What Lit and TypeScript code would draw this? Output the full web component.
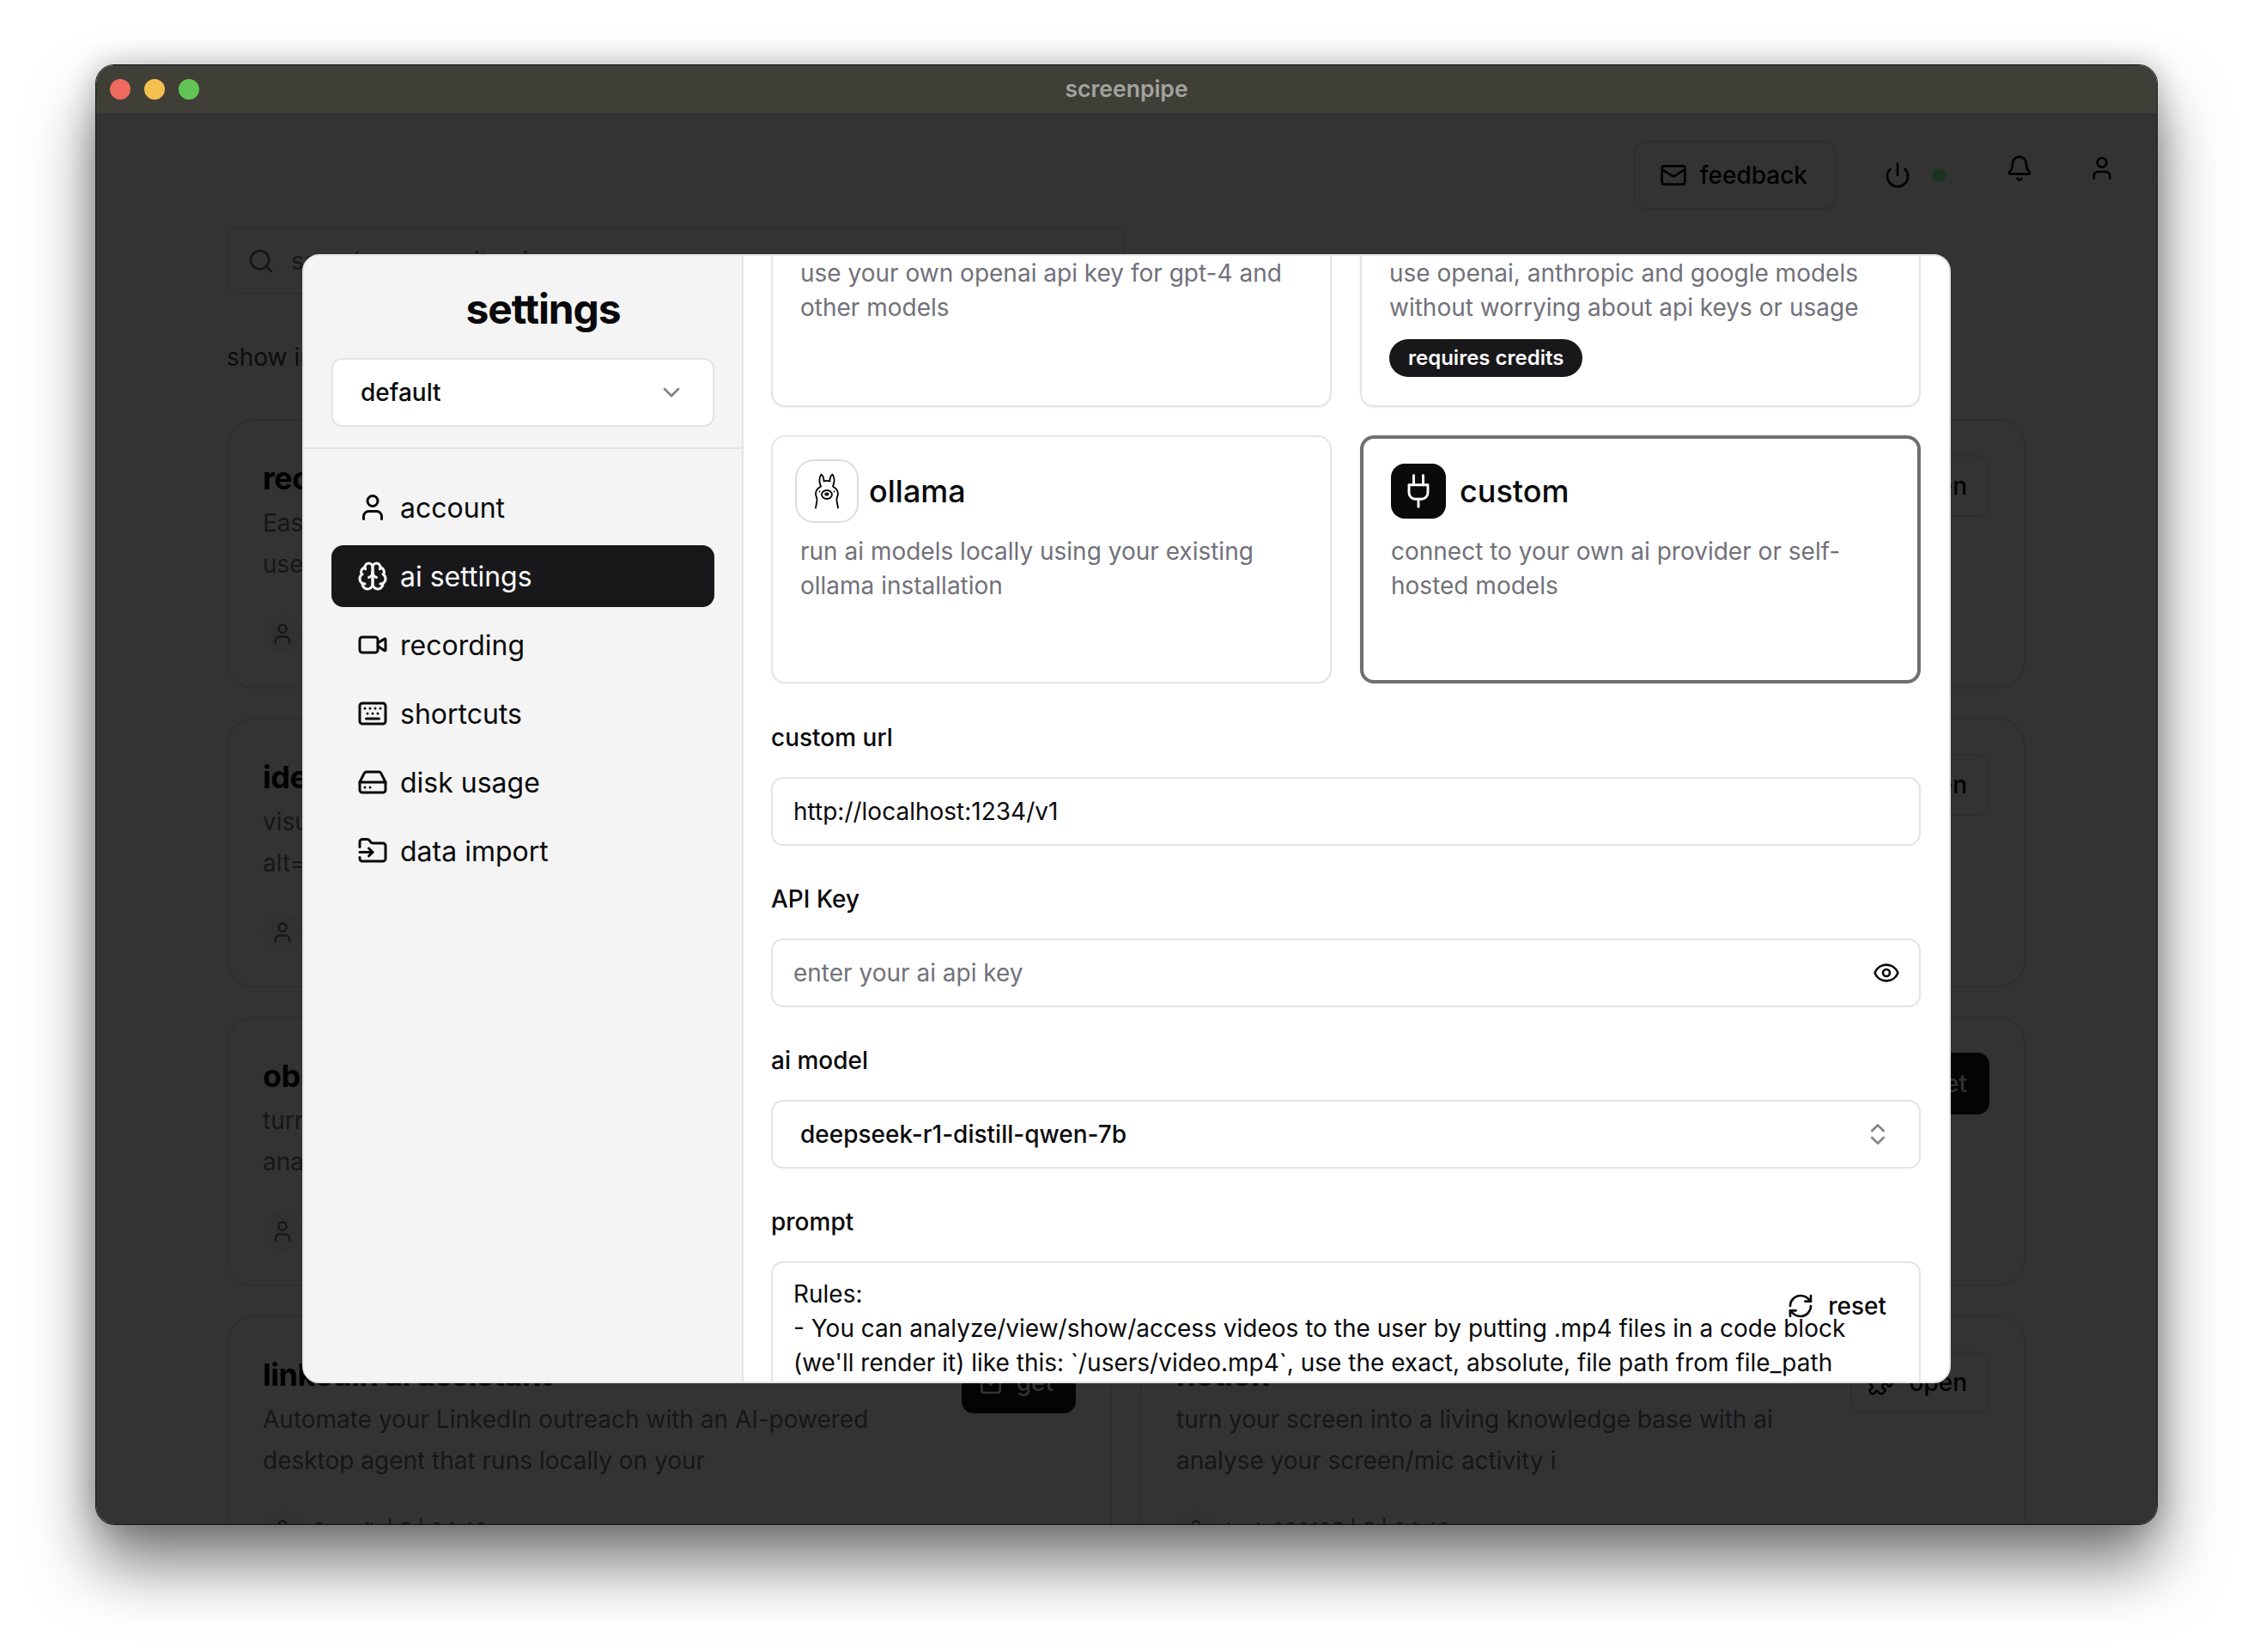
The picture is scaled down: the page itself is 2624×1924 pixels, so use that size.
import { LitElement, html, css, svg } from 'lit';
import { customElement } from 'lit/decorators.js';

const ICONS: Record<string, unknown> = {
  user: svg`<path d="M19 21v-2a4 4 0 0 0-4-4H9a4 4 0 0 0-4 4v2"/><circle cx="12" cy="7" r="4"/>`,
  brain: svg`<path d="M12 5a3 3 0 1 0-5.997.125 4 4 0 0 0-2.526 5.77 4 4 0 0 0 .556 6.588A4 4 0 1 0 12 18Z"/><path d="M12 5a3 3 0 1 1 5.997.125 4 4 0 0 1 2.526 5.77 4 4 0 0 1-.556 6.588A4 4 0 1 1 12 18Z"/><path d="M15 13a4.5 4.5 0 0 1-3-4 4.5 4.5 0 0 1-3 4"/><path d="M17.599 6.5a3 3 0 0 0 .399-1.375"/><path d="M6.003 5.125A3 3 0 0 0 6.401 6.5"/><path d="M3.477 10.896a4 4 0 0 1 .585-.396"/><path d="M19.938 10.5a4 4 0 0 1 .585.396"/><path d="M6 18a4 4 0 0 1-1.967-.516"/><path d="M19.967 17.484A4 4 0 0 1 18 18"/>`,
  video: svg`<path d="m16 13 5.223 3.482a.5.5 0 0 0 .777-.416V7.87a.5.5 0 0 0-.752-.432L16 10.5"/><rect x="2" y="6" width="14" height="12" rx="2"/>`,
  keyboard: svg`<path d="M10 8h.01"/><path d="M12 12h.01"/><path d="M14 8h.01"/><path d="M16 12h.01"/><path d="M18 8h.01"/><path d="M6 8h.01"/><path d="M7 16h10"/><path d="M8 12h.01"/><rect width="20" height="16" x="2" y="4" rx="2"/>`,
  drive: svg`<line x1="22" x2="2" y1="12" y2="12"/><path d="M5.45 5.11 2 12v6a2 2 0 0 0 2 2h16a2 2 0 0 0 2-2v-6l-3.45-6.89A2 2 0 0 0 16.76 4H7.24a2 2 0 0 0-1.79 1.11z"/><line x1="6" x2="6.01" y1="16" y2="16"/><line x1="10" x2="10.01" y1="16" y2="16"/>`,
  folderInput: svg`<path d="M2 9V5a2 2 0 0 1 2-2h3.9a2 2 0 0 1 1.69.9l.81 1.2a2 2 0 0 0 1.67.9H20a2 2 0 0 1 2 2v10a2 2 0 0 1-2 2H4a2 2 0 0 1-2-2v-1"/><path d="M2 13h10"/><path d="m9 16 3-3-3-3"/>`,
  mail: svg`<rect width="20" height="16" x="2" y="4" rx="2"/><path d="m22 7-8.97 5.7a1.94 1.94 0 0 1-2.06 0L2 7"/>`,
  power: svg`<path d="M12 2v10"/><path d="M18.4 6.6a9 9 0 1 1-12.77.04"/>`,
  bell: svg`<path d="M10.268 21a2 2 0 0 0 3.464 0"/><path d="M3.262 15.326A1 1 0 0 0 4 17h16a1 1 0 0 0 .74-1.673C19.41 13.956 18 12.499 18 8A6 6 0 0 0 6 8c0 4.499-1.411 5.956-2.738 7.326"/>`,
  eye: svg`<path d="M2.062 12.348a1 1 0 0 1 0-.696 10.75 10.75 0 0 1 19.876 0 1 1 0 0 1 0 .696 10.75 10.75 0 0 1-19.876 0"/><circle cx="12" cy="12" r="3"/>`,
  updown: svg`<path d="m7 15 5 5 5-5"/><path d="m7 9 5-5 5 5"/>`,
  down: svg`<path d="m6 9 6 6 6-6"/>`,
  search: svg`<circle cx="11" cy="11" r="8"/><path d="m21 21-4.3-4.3"/>`,
  refresh: svg`<path d="M3 12a9 9 0 0 1 9-9 9.75 9.75 0 0 1 6.74 2.74L21 8"/><path d="M21 3v5h-5"/><path d="M21 12a9 9 0 0 1-9 9 9.75 9.75 0 0 1-6.74-2.74L3 16"/><path d="M8 16H3v5"/>`,
  plug: svg`<path d="M12 22v-5"/><path d="M9 8V2"/><path d="M15 8V2"/><path d="M18 8v5a4 4 0 0 1-4 4h-4a4 4 0 0 1-4-4V8Z"/>`,
  get: svg`<rect x="4" y="3" width="16" height="18" rx="2"/><path d="m9 11 3 3 3-3"/>`,
  puzzle: svg`<path d="M19.439 7.85c-.049.322.059.648.289.878l1.568 1.568c.47.47.706 1.087.706 1.704s-.235 1.233-.706 1.704l-1.611 1.611a.98.98 0 0 1-.837.276c-.47-.07-.802-.48-.968-.925a2.501 2.501 0 1 0-3.214 3.214c.446.166.855.497.925.968a.979.979 0 0 1-.276.837l-1.61 1.61a2.404 2.404 0 0 1-1.705.707 2.402 2.402 0 0 1-1.704-.706l-1.568-1.568a1.026 1.026 0 0 0-.877-.29c-.493.074-.84.504-1.02.968a2.5 2.5 0 1 1-3.237-3.237c.464-.18.894-.527.967-1.02a1.026 1.026 0 0 0-.289-.877l-1.568-1.568A2.402 2.402 0 0 1 1.998 12c0-.617.236-1.234.706-1.704L4.23 8.77c.24-.24.581-.353.917-.303.515.077.877.528 1.073 1.01a2.5 2.5 0 1 0 3.259-3.259c-.482-.196-.933-.558-1.01-1.073-.05-.336.062-.676.303-.917l1.525-1.525A2.402 2.402 0 0 1 12 1.998c.617 0 1.234.236 1.704.706l1.568 1.568c.23.23.556.338.877.29.493-.074.84-.504 1.02-.968a2.5 2.5 0 1 1 3.237 3.237c-.464.18-.894.527-.967 1.02Z"/>`,
};

const icon = (name: string, size = 32, stroke = 2) => html`<svg
  class="icon"
  width=${size}
  height=${size}
  viewBox="0 0 24 24"
  fill="none"
  stroke="currentColor"
  stroke-width=${stroke}
  stroke-linecap="round"
  stroke-linejoin="round"
>${ICONS[name]}</svg>`;

const PIPES = [
  { title: 'recall', desc: ['Easily search through everything you have', 'used on your computer'], owner: 'louis030195', action: 'open' },
  { title: 'reddit auto posts', desc: ['post summaries of your activity', 'to your favourite subreddits'], owner: 'louis030195', action: 'open' },
  { title: 'identify speakers', desc: ['visually label the speakers in', 'alt=your recorded meetings'], owner: 'louis030195', action: 'open' },
  { title: 'search', desc: ['search your screen and audio', 'history with natural language'], owner: 'louis030195', action: 'open' },
  { title: 'obsidian', desc: ['turn your screen into logs and', 'analyse your activity in your vault'], owner: 'louis030195', action: 'open' },
  { title: 'timeline', desc: ['rewind through your day', 'with a visual timeline'], owner: 'louis030195', action: 'get' },
  { title: 'linkedin ai assistant', desc: ['Automate your LinkedIn outreach with an AI-powered', 'desktop agent that runs locally on your'], owner: 'Sonafk', action: 'get' },
  { title: 'notion', desc: ['turn your screen into a living knowledge base with ai', 'analyse your screen/mic activity i'], owner: 'louis030195', action: 'open' },
];

const NAV = [
  { label: 'account', icon: 'user' },
  { label: 'ai settings', icon: 'brain', active: true },
  { label: 'recording', icon: 'video' },
  { label: 'shortcuts', icon: 'keyboard' },
  { label: 'disk usage', icon: 'drive' },
  { label: 'data import', icon: 'folderInput' },
];

@customElement('app-root')
export class AppRoot extends LitElement {
  static styles = css`
    :host {
      display: block;
      width: 2624px;
      height: 1924px;
      overflow: hidden;
      background: #fff;
      font-family: Inter, 'Liberation Sans', sans-serif;
      color: #09090b;
    }
    * {
      box-sizing: border-box;
    }
    .icon {
      display: block;
      flex: none;
    }
    .window {
      position: relative;
      display: flex;
      flex-direction: column;
      width: 2402px;
      height: 1701px;
      margin: 75px 0 0 111px;
      border: 1px solid #111;
      border-radius: 22px;
      overflow: hidden;
      background: #fff;
      box-shadow: 0 46px 76px rgba(0, 0, 0, 0.52), 0 0 34px rgba(0, 0, 0, 0.24);
    }
    .titlebar {
      position: relative;
      flex: none;
      display: flex;
      align-items: center;
      justify-content: center;
      height: 56px;
      padding-bottom: 2px;
      background: #3f3f38;
      color: #a3a39e;
      font-size: 26.500px;
      font-weight: 600;
    }
    .lights {
      position: absolute;
      left: 16px;
      top: 16px;
      display: flex;
      gap: 16px;
    }
    .lights span {
      width: 24px;
      height: 24px;
      border-radius: 50%;
    }
    .red { background: #ee6a5f; }
    .yellow { background: #f5bf4f; }
    .green { background: #61c454; }
    .app {
      flex: 1;
      min-height: 0;
      padding: 32px 0 0 152px;
      overflow: hidden;
    }
    .topbar {
      display: flex;
      align-items: flex-start;
      justify-content: flex-end;
      padding-right: 48px;
    }
    .feedback {
      display: flex;
      align-items: center;
      gap: 15px;
      height: 80px;
      padding: 0 32px 0 28px;
      border: 2px solid #e4e4e7;
      border-radius: 14px;
      font-size: 28px;
      font-weight: 500;
    }
    .power {
      display: flex;
      align-items: center;
      gap: 24px;
      height: 80px;
      margin: 0 70px 0 55px;
    }
    .dot {
      width: 16px;
      height: 16px;
      border-radius: 50%;
      background: #80ffa0;
    }
    .top-icon {
      display: flex;
      align-items: center;
      height: 64px;
    }
    .top-icon + .top-icon {
      margin-left: 64px;
    }
    .search {
      display: flex;
      align-items: center;
      gap: 19px;
      width: 1047px;
      height: 78px;
      margin-top: 21px;
      padding: 0 22px;
      border: 2px solid #e4e4e7;
      border-radius: 14px;
      font-size: 28px;
      color: #71717a;
    }
    .filter {
      margin-top: 53px;
      font-size: 28px;
      line-height: 40px;
      color: #3f3f46;
    }
    .store {
      display: grid;
      grid-template-columns: 1031px 1031px;
      grid-auto-rows: 314px;
      gap: 34px 33px;
      margin-top: 52px;
    }
    .pipe {
      display: grid;
      grid-template-columns: 1fr auto;
      align-items: start;
      padding: 40px;
      border: 2px solid #e4e4e7;
      border-radius: 32px;
    }
    .pipe h3 {
      margin: 7px 0 0;
      font-size: 36px;
      line-height: 40px;
      font-weight: 700;
      letter-spacing: -0.5px;
    }
    .pipe p {
      margin: 8px 0 0;
      font-size: 28px;
      line-height: 48px;
      color: #71717a;
      white-space: nowrap;
    }
    .owner {
      display: flex;
      align-items: center;
      gap: 12px;
      margin-top: 34px;
      font-size: 24px;
      color: #71717a;
    }
    .avatar {
      display: flex;
      align-items: center;
      justify-content: center;
      width: 46px;
      height: 46px;
      border-radius: 50%;
      background: #f4f4f5;
    }
    .action {
      display: flex;
      align-items: center;
      gap: 16px;
      height: 72px;
      padding: 0 24px 0 18px;
      border: 2px solid #e4e4e7;
      border-radius: 14px;
      font-size: 28px;
      font-weight: 500;
    }
    .action.get {
      gap: 14px;
      padding-left: 16px;
      background: #18181b;
      border-color: #18181b;
      color: #fafafa;
    }
    .overlay {
      position: absolute;
      inset: 56px 0 0;
      background: rgba(0, 0, 0, 0.8);
    }
    .modal {
      position: absolute;
      left: 240px;
      top: 220px;
      display: flex;
      width: 1920px;
      height: 1315px;
      border: 2px solid #e4e4e7;
      border-radius: 20px;
      overflow: hidden;
      background: #fff;
    }
    .sidebar {
      flex: none;
      width: 512px;
      background: #f4f4f4;
      border-right: 2px solid #e4e4e7;
    }
    .sidebar-head {
      padding: 34px 32px 24px;
      border-bottom: 2px solid #e4e4e7;
    }
    .sidebar h2 {
      margin: 0 0 29px;
      padding-left: 47px;
      font-size: 48px;
      line-height: 56px;
      font-weight: 700;
      text-align: center;
      letter-spacing: -1.1px;
    }
    .profile {
      display: flex;
      align-items: center;
      justify-content: space-between;
      width: 446px;
      height: 80px;
      padding: 0 32px;
      background: #fff;
      border: 2px solid #e4e4e7;
      border-radius: 12px;
      font-size: 28px;
      font-weight: 500;
    }
    .muted {
      color: #09090b;
      opacity: 0.5;
    }
    nav {
      display: flex;
      flex-direction: column;
      gap: 8px;
      padding: 32px 32px 0;
    }
    .nav-item {
      display: flex;
      align-items: center;
      gap: 14px;
      width: 446px;
      height: 72px;
      padding-left: 30px;
      border-radius: 14px;
      font-size: 32px;
    }
    .nav-item.active {
      background: #18181b;
      color: #fafafa;
    }
    .panel {
      flex: 1;
      min-width: 0;
      overflow: hidden;
      padding: 0 33px 0 32px;
    }
    .providers {
      display: grid;
      grid-template-columns: 1fr 1fr;
      grid-template-rows: 291px 289px;
      gap: 33px 33px;
      margin: -115px 0 43px;
    }
    .provider {
      padding: 26px 32px 0;
      border: 2px solid #e4e4e7;
      border-radius: 16px;
      box-shadow: 0 1px 3px rgba(0, 0, 0, 0.05);
    }
    .provider.selected {
      padding-top: 24px;
      border: 4px solid #6f6f6f;
    }
    .provider-head {
      display: flex;
      align-items: center;
      gap: 16px;
      min-height: 74px;
      margin-bottom: 13px;
      font-size: 36px;
      font-weight: 500;
    }
    .logo {
      display: flex;
      align-items: center;
      justify-content: center;
      width: 64px;
      height: 64px;
      border-radius: 16px;
      background: #0a0a0a;
      color: #fff;
    }
    .logo.outline {
      width: 74px;
      height: 74px;
      margin: 0 -4px 0 -6px;
      border: 2px solid #dcdce2;
      border-radius: 22px;
      background: #fff;
      color: #000;
    }
    .provider p {
      margin: 0;
      font-size: 28px;
      line-height: 40px;
      color: #71717a;
    }
    .badge {
      display: inline-block;
      margin-top: 17px;
      padding: 0 22px;
      border-radius: 22px;
      background: #18181b;
      color: #fafafa;
      font-size: 24px;
      line-height: 44px;
      font-weight: 600;
    }
    .field {
      margin-bottom: 42px;
    }
    label {
      display: block;
      margin-bottom: 26px;
      font-size: 28px;
      line-height: 40px;
      font-weight: 500;
    }
    .input {
      display: flex;
      align-items: center;
      justify-content: space-between;
      height: 80px;
      padding: 0 22px 0 24px;
      border: 2px solid #e4e4e7;
      border-radius: 14px;
      font-size: 28px;
    }
    .placeholder {
      color: #71717a;
    }
    .input.select {
      padding: 0 32px;
      font-weight: 500;
    }
    .prompt {
      position: relative;
      height: 360px;
      padding: 16px 24px;
      border: 2px solid #e4e4e7;
      border-radius: 14px;
      font-size: 28px;
      line-height: 40px;
    }
    .reset {
      position: absolute;
      right: 38px;
      top: 30px;
      display: flex;
      align-items: center;
      gap: 16px;
      font-weight: 500;
    }
  `;

  renderPipe(pipe: (typeof PIPES)[number]) {
    return html`<article class="pipe">
      <div>
        <h3>${pipe.title}</h3>
        <p>${pipe.desc[0]}<br />${pipe.desc[1]}</p>
        <div class="owner">
          <span class="avatar">${icon('user', 28)}</span>
          <span>${pipe.owner} | 5 | 0.1.40</span>
        </div>
      </div>
      <div class="action ${pipe.action}">
        ${icon(pipe.action === 'get' ? 'get' : 'puzzle')}
        <span>${pipe.action}</span>
      </div>
    </article>`;
  }

  render() {
    return html`
      <div class="window">
        <div class="titlebar">
          <div class="lights">
            <span class="red"></span><span class="yellow"></span><span class="green"></span>
          </div>
          screenpipe
        </div>
        <div class="app">
          <div class="topbar">
            <div class="feedback">${icon('mail')}<span>feedback</span></div>
            <div class="power">${icon('power')}<span class="dot"></span></div>
            <div class="top-icon">${icon('bell')}</div>
            <div class="top-icon">${icon('user')}</div>
          </div>
          <div class="search">${icon('search')}<span>search community pipes...</span></div>
          <div class="filter">show installed only</div>
          <div class="store">${PIPES.map((p) => this.renderPipe(p))}</div>
        </div>
        <div class="overlay"></div>
        <div class="modal">
          <aside class="sidebar">
            <div class="sidebar-head">
              <h2>settings</h2>
              <div class="profile">
                <span>default</span>
                <span class="muted">${icon('down')}</span>
              </div>
            </div>
            <nav>
              ${NAV.map(
                (n) => html`<div class="nav-item ${n.active ? 'active' : ''}">
                  ${icon(n.icon, 36)}<span>${n.label}</span>
                </div>`
              )}
            </nav>
          </aside>
          <section class="panel">
            <div class="providers">
              <div class="provider">
                <div class="provider-head"><span class="logo">${icon('brain', 40)}</span>openai</div>
                <p>use your own openai api key for gpt-4 and other models</p>
              </div>
              <div class="provider">
                <div class="provider-head"><span class="logo">${icon('brain', 40)}</span>screenpipe cloud</div>
                <p>use openai, anthropic and google models without worrying about api keys or usage</p>
                <span class="badge">requires credits</span>
              </div>
              <div class="provider">
                <div class="provider-head">
                  <span class="logo outline">
                    <svg width="32" height="42" viewBox="0 0 32 42" fill="none" stroke="currentColor" stroke-width="1.800" stroke-linecap="round" stroke-linejoin="round">
                      <path d="M9 15.500C7 10.500 7 5 9.500 1.500c2.200 1.500 3 5 3 8 2.300-.7 4.700-.7 7 0 0-3 .8-6.500 3-8C25 5 25 10.500 23 15.500c3.500 2 6 5 6 8.500 0 3-2 4.500-1.500 8l1.500 8.500"/>
                      <path d="M9 15.500c-3.500 2-6 5-6 8.500 0 3 2 4.500 1.500 8L3 40.500"/>
                      <ellipse cx="16" cy="25" rx="6" ry="5"/>
                      <ellipse cx="16" cy="24.500" rx="1.800" ry="1.200"/>
                      <path d="M7.500 21.500h.01"/>
                      <path d="M24.500 21.500h.01"/>
                    </svg>
                  </span>
                  ollama
                </div>
                <p>run ai models locally using your existing ollama installation</p>
              </div>
              <div class="provider selected">
                <div class="provider-head"><span class="logo">${icon('plug', 44, 1.6)}</span>custom</div>
                <p>connect to your own ai provider or self-hosted models</p>
              </div>
            </div>
            <div class="field">
              <label>custom url</label>
              <div class="input">http://localhost:1234/v1</div>
            </div>
            <div class="field">
              <label>API Key</label>
              <div class="input">
                <span class="placeholder">enter your ai api key</span>
                ${icon('eye')}
              </div>
            </div>
            <div class="field">
              <label>ai model</label>
              <div class="input select">
                <span>deepseek-r1-distill-qwen-7b</span>
                <span class="muted">${icon('updown')}</span>
              </div>
            </div>
            <div class="field">
              <label>prompt</label>
              <div class="prompt">
                Rules:<br />
                - You can analyze/view/show/access videos to the user by putting .mp4 files in a code block<br />
                (we'll render it) like this: \`/users/video.mp4\`, use the exact, absolute, file path from file_path<br />
                property
                <div class="reset">${icon('refresh')}<span>reset</span></div>
              </div>
            </div>
          </section>
        </div>
      </div>
    `;
  }
}
